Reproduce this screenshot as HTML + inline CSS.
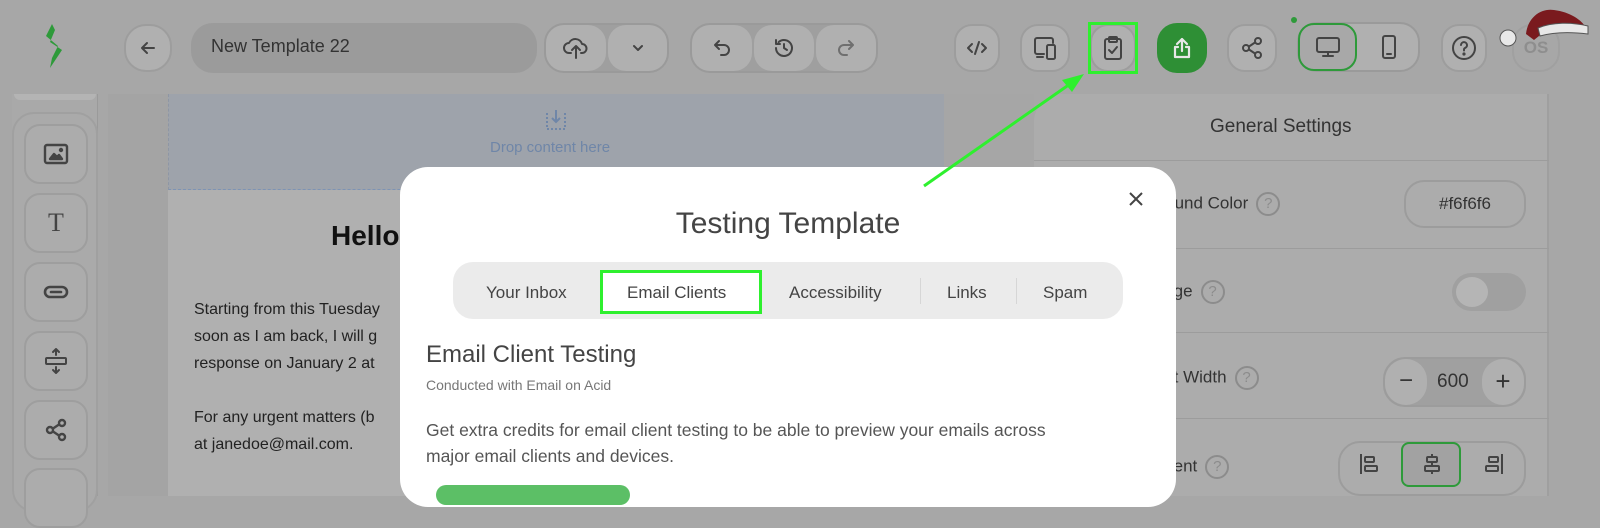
<!DOCTYPE html>
<html><head><meta charset="utf-8"><style>
*{box-sizing:border-box;margin:0;padding:0}
body{width:1600px;height:496px;overflow:hidden;background:#a7a7a7;font-family:"Liberation Sans",sans-serif;position:relative}
.abs{position:absolute}
.btn{position:absolute;background:#b0b0b0;border:2px solid #9d9d9d;border-radius:18px;display:flex;align-items:center;justify-content:center}
.grp{position:absolute;background:#9f9f9f;border-radius:20px;border:2px solid #9a9a9a}
svg{display:block}
.ic{stroke:#444;fill:none;stroke-width:2;stroke-linecap:round;stroke-linejoin:round}
.side{position:absolute;left:24px;width:64px;height:60px;border:2px solid #9e9e9e;border-radius:16px;background:#acacac;display:flex;align-items:center;justify-content:center}
.row{position:absolute;left:1034px;width:515px;border-top:1px solid #9c9c9c}
.lbl{position:absolute;font-size:17px;color:#333}
.q{display:inline-block;width:24px;height:24px;border:2px solid #8c8c8c;border-radius:50%;color:#8c8c8c;font-size:15px;text-align:center;line-height:20px;margin-left:8px;vertical-align:middle}
.tab{position:absolute;top:283px;font-size:17px;color:#444}
</style></head><body>
<!-- logo -->
<svg class="abs" style="left:40px;top:22px" width="28" height="48" viewBox="0 0 28 48"><path d="M12 2 L6 14 L18 24 L12 36 L10 46 L22 28 L10 20 L15 8Z" fill="#2e9a3a"/></svg>
<!-- top left -->
<div class="btn" style="left:124px;top:24px;width:48px;height:48px;border-radius:22px"><svg width="20" height="20" viewBox="0 0 20 20" class="ic"><path d="M16 10H4M9 5L4 10L9 15"/></svg></div>
<div class="abs" style="left:191px;top:23px;width:346px;height:50px;background:#9b9b9b;border-radius:22px;font-size:18px;color:#333;padding:13px 20px">New Template 22</div>
<div class="grp" style="left:544px;top:23px;width:125px;height:50px"></div>
<div class="btn" style="left:546px;top:25px;width:60px;height:46px;border:none"><svg width="26" height="24" viewBox="0 0 26 24" class="ic"><path d="M8 17H6a5 5 0 0 1 0-10 7 7 0 0 1 13 1 4.5 4.5 0 0 1 0 9h-1M13 22V11M9 14l4-4 4 4"/></svg></div>
<div class="btn" style="left:608px;top:25px;width:59px;height:46px;border:none"><svg width="14" height="10" viewBox="0 0 14 10" class="ic"><path d="M3 3l4 4 4-4"/></svg></div>
<div class="grp" style="left:690px;top:23px;width:188px;height:50px"></div>
<div class="btn" style="left:692px;top:25px;width:60px;height:46px;border:none"><svg width="22" height="22" viewBox="0 0 22 22" class="ic"><path d="M8 4L4 8l4 4M4 8h9a5 5 0 0 1 0 10h-3"/></svg></div>
<div class="btn" style="left:754px;top:25px;width:60px;height:46px;border:none"><svg width="24" height="24" viewBox="0 0 24 24" class="ic"><path d="M4 12a8 8 0 1 0 2.5-5.8M4 4v4h4M12 8v4l3 2"/></svg></div>
<div class="btn" style="left:816px;top:25px;width:60px;height:46px;border:none"><svg width="22" height="22" viewBox="0 0 22 22" class="ic" style="opacity:.6"><path d="M14 4l4 4-4 4M18 8H9a5 5 0 0 0 0 10h3"/></svg></div>
<!-- top right -->
<div class="btn" style="left:954px;top:24px;width:46px;height:48px"><svg width="24" height="20" viewBox="0 0 24 20" class="ic"><path d="M7 6L3 10l4 4M17 6l4 4-4 4M14 4l-4 12"/></svg></div>
<div class="btn" style="left:1020px;top:24px;width:50px;height:48px"><svg width="28" height="26" viewBox="0 0 28 26" class="ic"><path d="M13 19H6a2 2 0 0 1-2-2V5a2 2 0 0 1 2-2h14a2 2 0 0 1 2 2v3M6 22h6"/><rect x="16" y="10" width="8" height="14" rx="1.5"/></svg></div>
<div class="btn" style="left:1090px;top:24px;width:46px;height:48px"><svg width="22" height="26" viewBox="0 0 22 26" class="ic"><rect x="3" y="4" width="16" height="20" rx="2"/><rect x="7" y="2" width="8" height="5" rx="1"/><path d="M7 15l3 3 5-6"/></svg></div>
<div class="abs" style="left:1088px;top:22px;width:50px;height:52px;border:3px solid #2ef02e"></div>
<div class="abs" style="left:1157px;top:23px;width:50px;height:50px;background:#2e8f35;border-radius:20px;display:flex;align-items:center;justify-content:center"><svg width="22" height="24" viewBox="0 0 22 24" style="stroke:#e8e8e8;fill:none;stroke-width:2.2;stroke-linecap:round;stroke-linejoin:round"><path d="M11 15V3M6 8l5-5 5 5M7 11H4v10h14V11h-3"/></svg></div>
<div class="btn" style="left:1227px;top:24px;width:50px;height:48px"><svg width="22" height="24" viewBox="0 0 22 24" class="ic"><circle cx="17" cy="5" r="3"/><circle cx="5" cy="12" r="3"/><circle cx="17" cy="19" r="3"/><path d="M8 10.5l6-4M8 13.5l6 4"/></svg></div>
<div class="abs" style="left:1291px;top:17px;width:6px;height:6px;border-radius:50%;background:#2e9a3a"></div>
<div class="grp" style="left:1297px;top:22px;width:123px;height:50px;background:#b0b0b0"></div>
<div class="abs" style="left:1298px;top:23px;width:59px;height:48px;border:2px solid #2e9a3a;border-radius:16px;background:#a8a8a8;display:flex;align-items:center;justify-content:center"><svg width="26" height="24" viewBox="0 0 26 24" class="ic"><rect x="2" y="3" width="22" height="14" rx="2"/><path d="M13 17v4M8 21h10"/></svg></div>
<div class="abs" style="left:1360px;top:23px;width:58px;height:48px;display:flex;align-items:center;justify-content:center"><svg width="16" height="26" viewBox="0 0 16 26" class="ic"><rect x="2" y="2" width="12" height="22" rx="2"/><path d="M6 20h4"/></svg></div>
<div class="btn" style="left:1441px;top:24px;width:46px;height:48px"><svg width="26" height="26" viewBox="0 0 26 26" class="ic"><circle cx="13" cy="13" r="11"/><path d="M10 10a3 3 0 1 1 4 3c-1 .5-1 1-1 2.5"/><circle cx="13" cy="19" r=".6" fill="#444"/></svg></div>
<div class="abs" style="left:1512px;top:24px;width:48px;height:48px;border:2px solid #a0a0a0;border-radius:20px;color:#8e8e8e;font-weight:bold;font-size:17px;text-align:center;line-height:44px">OS</div>
<svg class="abs" style="left:1492px;top:4px" width="104" height="46" viewBox="0 0 104 46"><path d="M34 30 C 36 12, 50 4, 62 6 C 78 8, 90 16, 94 24 L 52 28 L 42 36Z" fill="#7a1a1e"/><path d="M46 24 C 60 18, 80 18, 96 22 L96 30 C 80 28, 62 28, 48 32Z" fill="#e8e8e8" stroke="#555" stroke-width="1"/><circle cx="16" cy="34" r="8" fill="#e8e8e8" stroke="#555" stroke-width="1"/></svg>

<!-- left sidebar -->
<div class="abs" style="left:12px;top:94px;width:86px;height:402px;background:#a9a9a9;border-right:1px solid #9a9a9a"></div>
<div class="abs" style="left:14px;top:94px;width:82px;height:6px;background:#b4b4b4;border-radius:0 0 12px 12px"></div>
<div class="abs" style="left:12px;top:112px;width:86px;height:400px;border:2px solid #a0a0a0;border-radius:22px;background:#aaaaaa"></div>
<div class="side" style="top:124px"><svg width="26" height="22" viewBox="0 0 26 22" class="ic" style="stroke-width:2.4"><rect x="2" y="2" width="22" height="18" rx="2"/><path d="M7 16l4-5 3 3 2-2 3 4z" fill="#444"/><circle cx="18" cy="7" r="1" fill="#444"/></svg></div>
<div class="side" style="top:193px;font-family:'Liberation Serif',serif;font-size:26px;color:#444">T</div>
<div class="side" style="top:262px"><svg width="28" height="16" viewBox="0 0 28 16" class="ic" style="stroke-width:2.6"><rect x="3" y="3" width="22" height="10" rx="5"/><path d="M9 8h10"/></svg></div>
<div class="side" style="top:331px"><svg width="26" height="28" viewBox="0 0 26 28" class="ic"><path d="M13 2v6M10 5l3-3 3 3M13 26v-6M10 23l3 3 3-3"/><rect x="3" y="11" width="20" height="6" rx="1"/></svg></div>
<div class="side" style="top:400px"><svg width="22" height="24" viewBox="0 0 22 24" class="ic" style="stroke-width:2.4"><circle cx="17" cy="5" r="3"/><circle cx="5" cy="12" r="3"/><circle cx="17" cy="19" r="3"/><path d="M8 10.5l6-4M8 13.5l6 4"/></svg></div>
<div class="side" style="top:468px"></div>
<div class="abs" style="left:108px;top:94px;width:60px;height:402px;background:#a4a4a4"></div>

<!-- canvas -->
<div class="abs" style="left:168px;top:94px;width:776px;height:96px;background:#9ea3ab;border-left:1px dashed #8e96a4;border-bottom:1px dashed #7d93b4"></div>
<svg class="abs" style="left:544px;top:108px;stroke:#6f86a8;fill:none;stroke-width:2" width="24" height="24" viewBox="0 0 24 24"><path d="M3 5v16h18V5" stroke-dasharray="2 2"/><path d="M12 2v12M8 10l4 4 4-4"/></svg>
<div class="abs" style="left:490px;top:139px;font-size:15px;color:#6f86a8">Drop content here</div>
<div class="abs" style="left:168px;top:190px;width:776px;height:306px;background:#b0b0b0"></div>
<div class="abs" style="left:331px;top:220px;font-size:28px;font-weight:bold;color:#111">Hello</div>
<div class="abs" style="left:194px;top:296px;font-size:16px;line-height:27px;color:#222">Starting from this Tuesday<br>soon as I am back, I will g<br>response on January 2 at<br><br>For any urgent matters (b<br>at janedoe@mail.com.</div>
<div class="abs" style="left:944px;top:94px;width:90px;height:402px;background:#a6a6a6"></div>

<!-- right panel -->
<div class="abs" style="left:1034px;top:94px;width:515px;height:402px;background:#acacac;border-radius:28px 0 0 0;border-right:2px solid #9f9f9f"></div>
<div class="abs" style="left:1210px;top:116px;font-size:19px;color:#333">General Settings</div>
<div class="row" style="top:160px"></div>
<div class="lbl" style="left:1150px;top:192px">ground Color<span class="q">?</span></div>
<div class="abs" style="left:1404px;top:180px;width:122px;height:48px;border:2px solid #9c9c9c;border-radius:20px;font-size:17px;color:#333;text-align:center;line-height:44px">#f6f6f6</div>
<div class="row" style="top:248px"></div>
<div class="lbl" style="left:1150px;top:280px">mage<span class="q">?</span></div>
<div class="abs" style="left:1452px;top:273px;width:74px;height:38px;background:#a0a0a0;border-radius:19px"><div style="margin:4px;width:32px;height:30px;background:#b5b5b5;border-radius:50%"></div></div>
<div class="row" style="top:332px"></div>
<div class="lbl" style="left:1150px;top:366px">tent Width<span class="q">?</span></div>
<div class="abs" style="left:1383px;top:357px;width:143px;height:50px;background:#a0a0a0;border:2px solid #9c9c9c;border-radius:22px;font-size:19px;color:#333"><div style="position:absolute;left:0;top:0;width:42px;height:46px;background:#b0b0b0;border-radius:22px;text-align:center;line-height:44px;font-size:24px">−</div><div style="position:absolute;left:52px;top:12px">600</div><div style="position:absolute;right:0;top:0;width:42px;height:46px;background:#b0b0b0;border-radius:22px;text-align:center;line-height:44px;font-size:26px">+</div></div>
<div class="row" style="top:418px"></div>
<div class="lbl" style="left:1150px;top:455px">nment<span class="q">?</span></div>
<div class="abs" style="left:1338px;top:441px;width:188px;height:55px;border:2px solid #9c9c9c;border-radius:22px;background:#acacac"></div>
<div class="abs" style="left:1401px;top:442px;width:60px;height:45px;border:2px solid #2e9a3a;border-radius:8px;background:#a2a2a2"></div>
<svg class="abs" style="left:1357px;top:452px" width="24" height="24" viewBox="0 0 24 24"><path d="M4 2v20" stroke="#444" stroke-width="2"/><rect x="8" y="5" width="9" height="5" rx="1" fill="none" stroke="#444" stroke-width="2"/><rect x="8" y="14" width="12" height="5" rx="1" fill="none" stroke="#444" stroke-width="2"/></svg>
<svg class="abs" style="left:1420px;top:452px" width="24" height="24" viewBox="0 0 24 24"><path d="M12 2v20" stroke="#444" stroke-width="2"/><rect x="7" y="5" width="10" height="5" rx="1" fill="#a2a2a2" stroke="#444" stroke-width="2"/><rect x="5" y="14" width="14" height="5" rx="1" fill="#a2a2a2" stroke="#444" stroke-width="2"/></svg>
<svg class="abs" style="left:1482px;top:452px" width="24" height="24" viewBox="0 0 24 24"><path d="M20 2v20" stroke="#444" stroke-width="2"/><rect x="7" y="5" width="9" height="5" rx="1" fill="none" stroke="#444" stroke-width="2"/><rect x="4" y="14" width="12" height="5" rx="1" fill="none" stroke="#444" stroke-width="2"/></svg>

<!-- modal -->
<div class="abs" style="left:400px;top:167px;width:776px;height:340px;background:#fff;border-radius:28px"></div>
<svg class="abs" style="left:1128px;top:191px" width="16" height="16" viewBox="0 0 16 16"><path d="M2 2l12 12M14 2L2 14" stroke="#444" stroke-width="2"/></svg>
<div class="abs" style="left:400px;top:207px;width:776px;text-align:center;font-size:30px;color:#444">Testing Template</div>
<div class="abs" style="left:453px;top:262px;width:670px;height:57px;background:#ebebeb;border-radius:20px"></div>
<div class="abs" style="left:920px;top:278px;width:1px;height:26px;background:#d6d6d6"></div>
<div class="abs" style="left:1016px;top:278px;width:1px;height:26px;background:#d6d6d6"></div>
<div class="abs" style="left:603px;top:272px;width:157px;height:40px;background:#fff"></div>
<div class="abs" style="left:600px;top:270px;width:162px;height:44px;border:3px solid #2ef02e"></div>
<div class="tab" style="left:486px">Your Inbox</div>
<div class="tab" style="left:627px">Email Clients</div>
<div class="tab" style="left:789px">Accessibility</div>
<div class="tab" style="left:947px">Links</div>
<div class="tab" style="left:1043px">Spam</div>
<div class="abs" style="left:426px;top:341px;font-size:24px;color:#444">Email Client Testing</div>
<div class="abs" style="left:426px;top:377px;font-size:14px;color:#777">Conducted with Email on Acid</div>
<div class="abs" style="left:426px;top:417px;font-size:17.5px;line-height:26px;color:#555">Get extra credits for email client testing to be able to preview your emails across<br>major email clients and devices.</div>
<div class="abs" style="left:436px;top:485px;width:194px;height:20px;background:#5cbf66;border-radius:10px"></div>

<!-- arrow -->
<svg class="abs" style="left:0;top:0" width="1600" height="496"><path d="M924 186 L1070 84" stroke="#2ef02e" stroke-width="3"/><path d="M1084 74 L1062 80 L1072 92Z" fill="#2ef02e"/></svg>
</body></html>
